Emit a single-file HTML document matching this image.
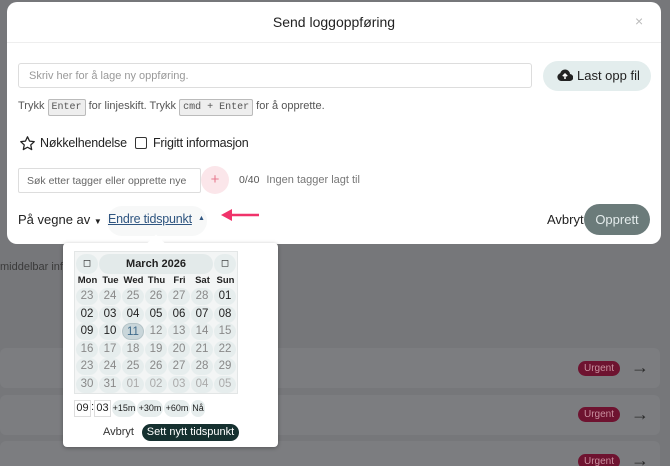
<!DOCTYPE html><html><head><style>
*{box-sizing:border-box;margin:0;padding:0}
html,body{width:670px;height:466px;overflow:hidden}
body{background:#76777a;font-family:"Liberation Sans",sans-serif;position:relative;color:#222}
.a{position:absolute;white-space:nowrap}
.row{position:absolute;left:0;width:660px;height:40px;background:#7c7d80;border-radius:6px}
.urg{position:absolute;left:578px;width:42px;height:15px;background:#6e1330;color:#c9909f;font-size:10px;border-radius:8px;text-align:center;line-height:15px}
.arr{position:absolute;left:631px;font-size:18px;color:#2a2a2a}
.modal{left:7px;top:2px;width:654px;height:242px;background:#fff;border-radius:10px}
kbd{font-family:"Liberation Mono",monospace;font-size:10px;background:#eee;border:1px solid #bbb;padding:2px 3px;border-radius:2px;color:#555}
.c{position:absolute;width:22px;height:17px;border-radius:9px;background:#e6eded;text-align:center;line-height:17px;font-size:11.5px;color:#888}
.d{color:#222}.o{color:#aaa}
.dn{position:absolute;font-size:9.5px;font-weight:bold;width:23px;text-align:center;color:#222}
.pl{position:absolute;top:400px;height:17px;border-radius:9px;background:#e6eded;font-size:9px;line-height:17px;text-align:center;color:#222}
</style></head><body>
<div class="a" style="left:0;top:261px;font-size:11px;color:#3a3a3a">middelbar inf</div>
<div class="row" style="top:348px"></div><div class="urg" style="top:361px">Urgent</div><div class="arr" style="top:357px">→</div>
<div class="row" style="top:395px"></div><div class="urg" style="top:407px">Urgent</div><div class="arr" style="top:404px">→</div>
<div class="row" style="top:441px"></div><div class="urg" style="top:454px">Urgent</div><div class="arr" style="top:450px">→</div>

<div class="a modal">
<div class="a" style="left:0;top:12px;width:654px;text-align:center;font-size:14px;color:#222">Send loggoppføring</div>
<div class="a" style="left:628px;top:11px;font-size:14px;color:#bbb">×</div>
<div class="a" style="left:0;top:40px;width:654px;height:1px;background:#eee"></div>
<div class="a" style="left:11px;top:61px;width:514px;height:25px;border:1px solid #ddd;border-radius:3px;font-size:11px;color:#999;padding:6px 10px">Skriv her for å lage ny oppføring.</div>
<div class="a" style="left:536px;top:59px;width:108px;height:30px;background:#e3eded;border-radius:15px;font-size:13px;line-height:30px;padding-left:34px;color:#222">Last opp fil</div>
<svg class="a" style="left:550px;top:66px" width="16" height="14" viewBox="0 0 16 14"><path d="M4 13h8.5a3.5 3.5 0 0 0 .5-7A5 5 0 0 0 3.2 5.2 4 4 0 0 0 4 13z" fill="#222"/><path d="M8 11V6M5.8 8.2 8 6l2.2 2.2" stroke="#fff" stroke-width="1.5" fill="none"/></svg>
<div class="a" style="left:11px;top:98px;font-size:11px;color:#555">Trykk <kbd>Enter</kbd> for linjeskift. Trykk <kbd>cmd + Enter</kbd> for å opprette.</div>
<svg class="a" style="left:12px;top:133px" width="17" height="17" viewBox="0 0 24 24"><path d="M12 2.5l2.9 6.1 6.6.8-4.9 4.6 1.3 6.6L12 17.3l-5.9 3.3 1.3-6.6-4.9-4.6 6.6-.8z" fill="none" stroke="#222" stroke-width="1.8" stroke-linejoin="round"/></svg>
<div class="a" style="left:33px;top:134px;font-size:12.5px;color:#222;letter-spacing:-.2px">Nøkkelhendelse</div>
<div class="a" style="left:128px;top:135px;width:12px;height:12px;border:1.5px solid #333;border-radius:2px"></div>
<div class="a" style="left:146px;top:134px;font-size:12.5px;color:#222;letter-spacing:-.2px">Frigitt informasjon</div>
<div class="a" style="left:11px;top:166px;width:183px;height:25px;border:1px solid #ddd;border-radius:2px;font-size:10.5px;color:#666;padding:6px 8px;overflow:hidden">Søk etter tagger eller opprette nye</div>
<div class="a" style="left:194px;top:164px;width:28px;height:28px;border-radius:14px;background:#fbe6ea;color:#e77a90;text-align:center;line-height:28px;font-size:15px">+</div>
<div class="a" style="left:232px;top:172px;font-size:10.5px;color:#555">0/40 <span style="font-size:11px;color:#777;margin-left:4px">Ingen tagger lagt til</span></div>
<div class="a" style="left:11px;top:210px;font-size:13px;color:#222">På vegne av <span style="font-size:8px">▼</span></div>
<div class="a" style="left:100px;top:204px;width:100px;height:30px;border-radius:15px;background:#f7f8f8"></div>
<div class="a" style="left:101px;top:210px;font-size:12.5px;color:#2f5580;text-decoration:underline;letter-spacing:-.2px">Endre tidspunkt</div>
<div class="a" style="left:191px;top:213px;font-size:7px;color:#2f5580">▲</div>
<svg class="a" style="left:214px;top:205px" width="40" height="16"><path d="M38 8H8" stroke="#f0336a" stroke-width="2.5"/><path d="M0 8l11-6v12z" fill="#f0336a"/></svg>
<div class="a" style="left:540px;top:210px;font-size:13px;color:#222">Avbryt</div>
<div class="a" style="left:577px;top:202px;width:66px;height:31px;border-radius:16px;background:#6b7b7a;color:#e4ecec;font-size:13px;text-align:center;line-height:31px">Opprett</div>
</div>

<div class="a" style="left:63px;top:243px;width:215px;height:204px;background:#fff;border-radius:4px;box-shadow:0 1px 4px rgba(0,0,0,.3)"></div>
<div class="a" style="left:150px;top:237px;width:12px;height:12px;background:#fff;transform:rotate(45deg)"></div>
<div class="a" style="left:74px;top:251px;width:164px;height:143px;background:#f3f5f5;border:1px solid #e3e6e6"></div>
<div class="c" style="left:76px;top:254px;height:20px;border-radius:10px;font-size:10px;line-height:20px;color:#222">◻</div>
<div class="c" style="left:214px;top:254px;height:20px;border-radius:10px;font-size:10px;line-height:20px;color:#222">◻</div>
<div class="a" style="left:99px;top:254px;width:114px;height:20px;border-radius:10px;background:#e3eaea;text-align:center;line-height:20px;font-size:11px;font-weight:bold;color:#222">March 2026</div>
<div id="g"></div>
<script>
var h='',dn=['Mon','Tue','Wed','Thu','Fri','Sat','Sun'];
for(var i=0;i<7;i++)h+='<div class="dn" style="left:'+(76+i*23)+'px;top:275px">'+dn[i]+'</div>';
var rows=[[23,24,25,26,27,28,'01'],['02','03','04','05','06','07','08'],['09',10,11,12,13,14,15],[16,17,18,19,20,21,22],[23,24,25,26,27,28,29],[30,31,'01','02','03','04','05']];
for(var r=0;r<6;r++)for(var c=0;c<7;c++){var cls='c';
 if((r==0&&c==6)||r==1||(r==2&&c<2))cls+=' d';if(r==5&&c>1)cls+=' o';
 var st='left:'+(76+c*23)+'px;top:'+(288+r*17.5)+'px;';
 if(r==2&&c==2)st+='background:#c9d6da;color:#3e6a8a;border:1px solid #b5c4c8;';
 h+='<div class="'+cls+'" style="'+st+'">'+rows[r][c]+'</div>';}
document.getElementById('g').innerHTML=h;
</script>
<div class="a" style="left:74px;top:400px;width:17px;height:17px;border:1px solid #ddd;font-size:11px;text-align:center;line-height:15px">09</div>
<div class="a" style="left:91px;top:401px;font-size:11px">:</div>
<div class="a" style="left:94px;top:400px;width:17px;height:17px;border:1px solid #ddd;font-size:11px;text-align:center;line-height:15px">03</div>
<div class="pl" style="left:112px;width:24px">+15m</div>
<div class="pl" style="left:137px;width:26px">+30m</div>
<div class="pl" style="left:164px;width:26px">+60m</div>
<div class="pl" style="left:191px;width:14px">Nå</div>
<div class="a" style="left:103px;top:426px;font-size:11px;color:#333">Avbryt</div>
<div class="a" style="left:142px;top:424px;width:97px;height:17px;border-radius:9px;background:#15302f;color:#fff;font-size:11px;text-align:center;line-height:17px">Sett nytt tidspunkt</div>
</body></html>
